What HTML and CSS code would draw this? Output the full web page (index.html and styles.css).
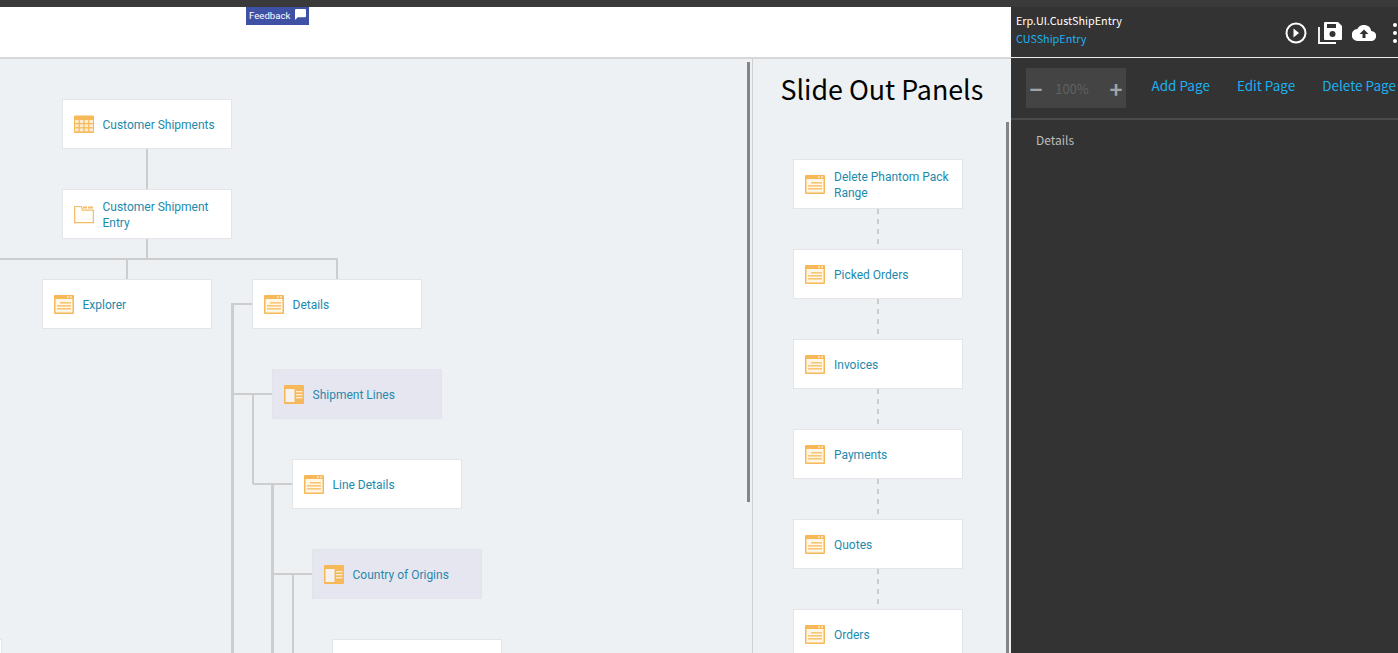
FILE: index.html
```html
<!DOCTYPE html>
<html lang="en">
<head>
<meta charset="utf-8">
<title>CUSShipEntry</title>
<link rel="stylesheet" href="styles.css">
</head>
<body>
<svg width="0" height="0" class="defs">
  <defs>
    <symbol id="i-window" viewBox="0 0 20 19">
      <rect x="0" y="0" width="20" height="19" rx="1" fill="#f6b858"/>
      <rect x="1.5" y="4" width="17" height="13.5" fill="#fff6e6"/>
      <rect x="13" y="1.5" width="2" height="1" fill="#fff"/>
      <rect x="16" y="1.5" width="2" height="1" fill="#fff"/>
      <rect x="6" y="7" width="11" height="1.6" fill="#f9c675"/>
      <rect x="3" y="10" width="14" height="1.6" fill="#f9c675"/>
      <rect x="3" y="13" width="14" height="1.6" fill="#f9c675"/>
    </symbol>
    <symbol id="i-grid" viewBox="0 0 20 18">
      <rect x="0" y="0" width="20" height="17.5" rx="1" fill="#f6b858"/>
      <g fill="#fdeccf">
        <rect x="1" y="4.5" width="3.6" height="3"/><rect x="5.8" y="4.5" width="3.6" height="3"/><rect x="10.6" y="4.5" width="3.6" height="3"/><rect x="15.4" y="4.5" width="3.6" height="3"/>
        <rect x="1" y="8.7" width="3.6" height="3"/><rect x="5.8" y="8.7" width="3.6" height="3"/><rect x="10.6" y="8.7" width="3.6" height="3"/><rect x="15.4" y="8.7" width="3.6" height="3"/>
        <rect x="1" y="12.9" width="3.6" height="3"/><rect x="5.8" y="12.9" width="3.6" height="3"/><rect x="10.6" y="12.9" width="3.6" height="3"/><rect x="15.4" y="12.9" width="3.6" height="3"/>
      </g>
    </symbol>
    <symbol id="i-folder" viewBox="0 0 20 18">
      <path d="M.6 1v16.2h18.8V4.6H8.4L7.4 1z" fill="#fffdf8" stroke="#f6bd68" stroke-width="1.2"/>
      <rect x="9" y="1" width="4" height="2" fill="#f6bd68"/>
      <rect x="14" y="1" width="5" height="2" fill="#f6bd68"/>
    </symbol>
    <symbol id="i-split" viewBox="0 0 20 19">
      <rect x="0" y="0" width="20" height="19" rx="1" fill="#f6b858"/>
      <rect x="1.5" y="4" width="9" height="13" fill="#f4f1ee"/>
      <rect x="12" y="6" width="6.5" height="1.4" fill="#fdeccf"/>
      <rect x="12" y="9" width="6.5" height="1.4" fill="#fdeccf"/>
      <rect x="12" y="12" width="6.5" height="1.4" fill="#fdeccf"/>
    </symbol>
  </defs>
</svg>
<div class="topstrip"></div>
<div class="app">
  <main class="workspace">
    <header class="toolbar">
      <button class="feedback">Feedback
        <svg class="feedback-icon" viewBox="0 0 12 12"><path d="M1 0h10a1 1 0 0 1 1 1v7a1 1 0 0 1-1 1H3l-3 3V1a1 1 0 0 1 1-1z" fill="#fff"/></svg>
      </button>
    </header>
    <div class="canvas-wrap">
      <section class="canvas">
        <svg class="links" width="748" height="595" viewBox="0 0 748 595">
          <path d="M147 91v40M147 181v20M0 201h338M127 201v20M337 201v20" />
          <path d="M252 246h-20M233 336h39M253 336v90M253 426h39M272 516h40M293 516v79" />
          <path class="trunk" d="M232.500 245v350M272.500 425v170" />
        </svg>
        <div class="node stub"></div>
        <a class="node n1"><svg class="ico"><use href="#i-grid"/></svg><span>Customer Shipments</span></a>
        <a class="node n2"><svg class="ico"><use href="#i-folder"/></svg><span>Customer Shipment Entry</span></a>
        <a class="node n3"><svg class="ico"><use href="#i-window"/></svg><span>Explorer</span></a>
        <a class="node n4"><svg class="ico"><use href="#i-window"/></svg><span>Details</span></a>
        <a class="node alt n5"><svg class="ico"><use href="#i-split"/></svg><span>Shipment Lines</span></a>
        <a class="node n6"><svg class="ico"><use href="#i-window"/></svg><span>Line Details</span></a>
        <a class="node alt n7"><svg class="ico"><use href="#i-split"/></svg><span>Country of Origins</span></a>
        <div class="node n8"></div>
        <div class="scroll-v"></div>
      </section>
      <aside class="slideouts">
        <h2>Slide Out Panels</h2>
        <div class="slide-list">
          <a class="node flow"><svg class="ico"><use href="#i-window"/></svg><span>Delete Phantom Pack Range</span></a>
          <div class="dash"></div>
          <a class="node flow"><svg class="ico"><use href="#i-window"/></svg><span>Picked Orders</span></a>
          <div class="dash"></div>
          <a class="node flow"><svg class="ico"><use href="#i-window"/></svg><span>Invoices</span></a>
          <div class="dash"></div>
          <a class="node flow"><svg class="ico"><use href="#i-window"/></svg><span>Payments</span></a>
          <div class="dash"></div>
          <a class="node flow"><svg class="ico"><use href="#i-window"/></svg><span>Quotes</span></a>
          <div class="dash"></div>
          <a class="node flow"><svg class="ico"><use href="#i-window"/></svg><span>Orders</span></a>
        </div>
        <div class="scroll-r"></div>
      </aside>
    </div>
  </main>
  <aside class="panel">
    <div class="panel-head">
      <div class="titles">
        <div class="t1">Erp.UI.CustShipEntry</div>
        <div class="t2">CUSShipEntry</div>
      </div>
      <div class="actions">
        <svg class="act play" viewBox="0 0 22 22"><circle cx="11" cy="11" r="9.5" fill="none" stroke="#fff" stroke-width="2"/><path d="M8.500 6.500l5.500 4.500-5.500 4.500z" fill="#fff"/></svg>
        <svg class="act save" viewBox="0 0 24 22"><path d="M7 0h13l4 4v13a1 1 0 0 1-1 1H7a1 1 0 0 1-1-1V1a1 1 0 0 1 1-1z" fill="#fff"/><rect x="9" y="2" width="9" height="4" fill="#333"/><circle cx="14.500" cy="12" r="3" fill="#333"/><path d="M1 5v16h17" fill="none" stroke="#fff" stroke-width="1.800"/></svg>
        <svg class="act cloud" viewBox="0 0 24 16"><path d="M19.300 6A7.500 7.500 0 0 0 5.300 4 6 6 0 0 0 6 16h13a5 5 0 0 0 .3-10z" fill="#fff"/><path d="M12 4.500l4.500 4.500h-3v4h-3V9h-3z" fill="#333"/></svg>
        <svg class="act dots" viewBox="0 0 4 20"><circle cx="2" cy="2" r="2" fill="#fff"/><circle cx="2" cy="10" r="2" fill="#fff"/><circle cx="2" cy="18" r="2" fill="#fff"/></svg>
      </div>
    </div>
    <div class="panel-tools">
      <div class="zoom">
        <span class="zbtn">−</span>
        <span class="zval">100%</span>
        <span class="zbtn">+</span>
      </div>
      <a class="link">Add Page</a>
      <a class="link">Edit Page</a>
      <a class="link">Delete Page</a>
    </div>
    <div class="pages">Details</div>
  </aside>
</div>
</body>
</html>
```
FILE: styles.css
```css
* { box-sizing: border-box; }
html, body { margin: 0; height: 100%; overflow: hidden; }
body { background: #333; font-family: Roboto, sans-serif; display: flex; flex-direction: column; }
.defs { position: absolute; }
.topstrip { height: 7px; background: #3a3a3a; flex: none; }
.app { flex: 1; display: flex; min-height: 0; }

.workspace { width: 1011px; flex: none; display: flex; flex-direction: column; background: #eef1f4; }
.toolbar { height: 52px; flex: none; background: #fff; border-bottom: 2px solid #d6d7d9; padding-left: 246px; }
.feedback { display: flex; align-items: center; gap: 5px; width: 63px; height: 18px; padding: 0 0 1px 3px; border: 0; background: #3f51a5; color: #fff; font: 400 9.6px Roboto, sans-serif; }
.feedback-icon { width: 11px; height: 11px; flex: none; margin-bottom: 2px; }

.canvas-wrap { flex: 1; display: flex; min-height: 0; }
.canvas { position: relative; width: 752px; flex: none; overflow: hidden; }
.links { position: absolute; left: 0; top: -1px; fill: none; stroke: #cdcdcd; stroke-width: 2; }
.links .trunk { stroke-width: 3; }

.node { width: 170px; height: 50px; display: flex; align-items: center; gap: 9px; padding: 0 11px; background: #fff; border: 1px solid #e4e5e8; color: #1c8aad; font-size: 12px; line-height: 16px; }
.node span { padding-top: 2px; }
.canvas > .node { position: absolute; gap: 8.5px; }
.node.alt { background: #e6e6f0; border-color: #e3e3ec; color: #2a88ad; }
.ico { width: 20px; height: 19px; flex: none; }
.n1 { left: 62px; top: 40px; }
.n2 { left: 62px; top: 130px; }
.n3 { left: 42px; top: 220px; }
.n4 { left: 252px; top: 220px; }
.n5 { left: 272px; top: 310px; }
.n6 { left: 292px; top: 400px; }
.n7 { left: 312px; top: 490px; }
.n8 { left: 332px; top: 580px; }
.stub { left: -168px; top: 580px; }
.scroll-v { position: absolute; left: 747px; top: 3px; width: 3px; height: 440px; background: #858585; }

.slideouts { position: relative; flex: 1; border-left: 1px solid #cfd0d2; min-width: 0; overflow: hidden; }
.slideouts h2 { margin: 12px 0 0 27.5px; font: 400 26.8px/36px "Noto Sans CJK SC", "Noto Sans", sans-serif; color: #000; white-space: nowrap; }
.slide-list { margin: 52px 0 0 40px; display: flex; flex-direction: column; }
.node.flow { flex: none; }
.dash { width: 2px; height: 40px; margin-left: 84px; flex: none; background: repeating-linear-gradient(to bottom, #cdcdcd 0 5px, transparent 5px 10px); }
.scroll-r { position: absolute; left: 253px; top: 63px; bottom: 0; width: 3px; background: #858585; }

.panel { flex: 1; min-width: 0; background: #333; color: #fff; display: flex; flex-direction: column; font-family: "Noto Sans CJK SC", "Noto Sans", sans-serif; }
.panel-head { height: 51px; flex: none; display: flex; justify-content: space-between; border-bottom: 1px solid #ececec; padding: 5px 0 0 5px; overflow: hidden; }
.t1 { font-size: 10.8px; line-height: 17px; font-weight: 400; white-space: nowrap; }
.t2 { font-size: 10.8px; line-height: 19px; color: #1cb0f0; }
.actions { display: flex; align-items: center; height: 42px; padding-right: 1px; }
.act { flex: none; }
.play { width: 22px; height: 22px; }
.save { width: 24px; height: 22px; margin-left: 11px; }
.cloud { width: 24px; height: 16px; margin-left: 10px; }
.dots { width: 4px; height: 20px; margin-left: 17px; }

.panel-tools { height: 62px; flex: none; display: flex; align-items: flex-start; padding: 10px 0 0 15px; border-bottom: 2px solid #4a4a4a; white-space: nowrap; }
.zoom { width: 100px; height: 40px; flex: none; background: #444; display: flex; align-items: center; justify-content: space-between; padding: 0 3px; margin-right: 25.5px; }
.zbtn { width: 14px; text-align: center; font-size: 22px; font-weight: 700; line-height: 38px; color: #a4a4a4; }
.zval { font-size: 13px; color: #616161; margin-right: 8px; }
.link { font-size: 13.5px; line-height: 35px; color: #1cb0f0; margin-right: 27px; flex: none; }
.pages { padding: 11px 0 0 25px; font-size: 12px; line-height: 18px; color: #bdbdbd; }
```
